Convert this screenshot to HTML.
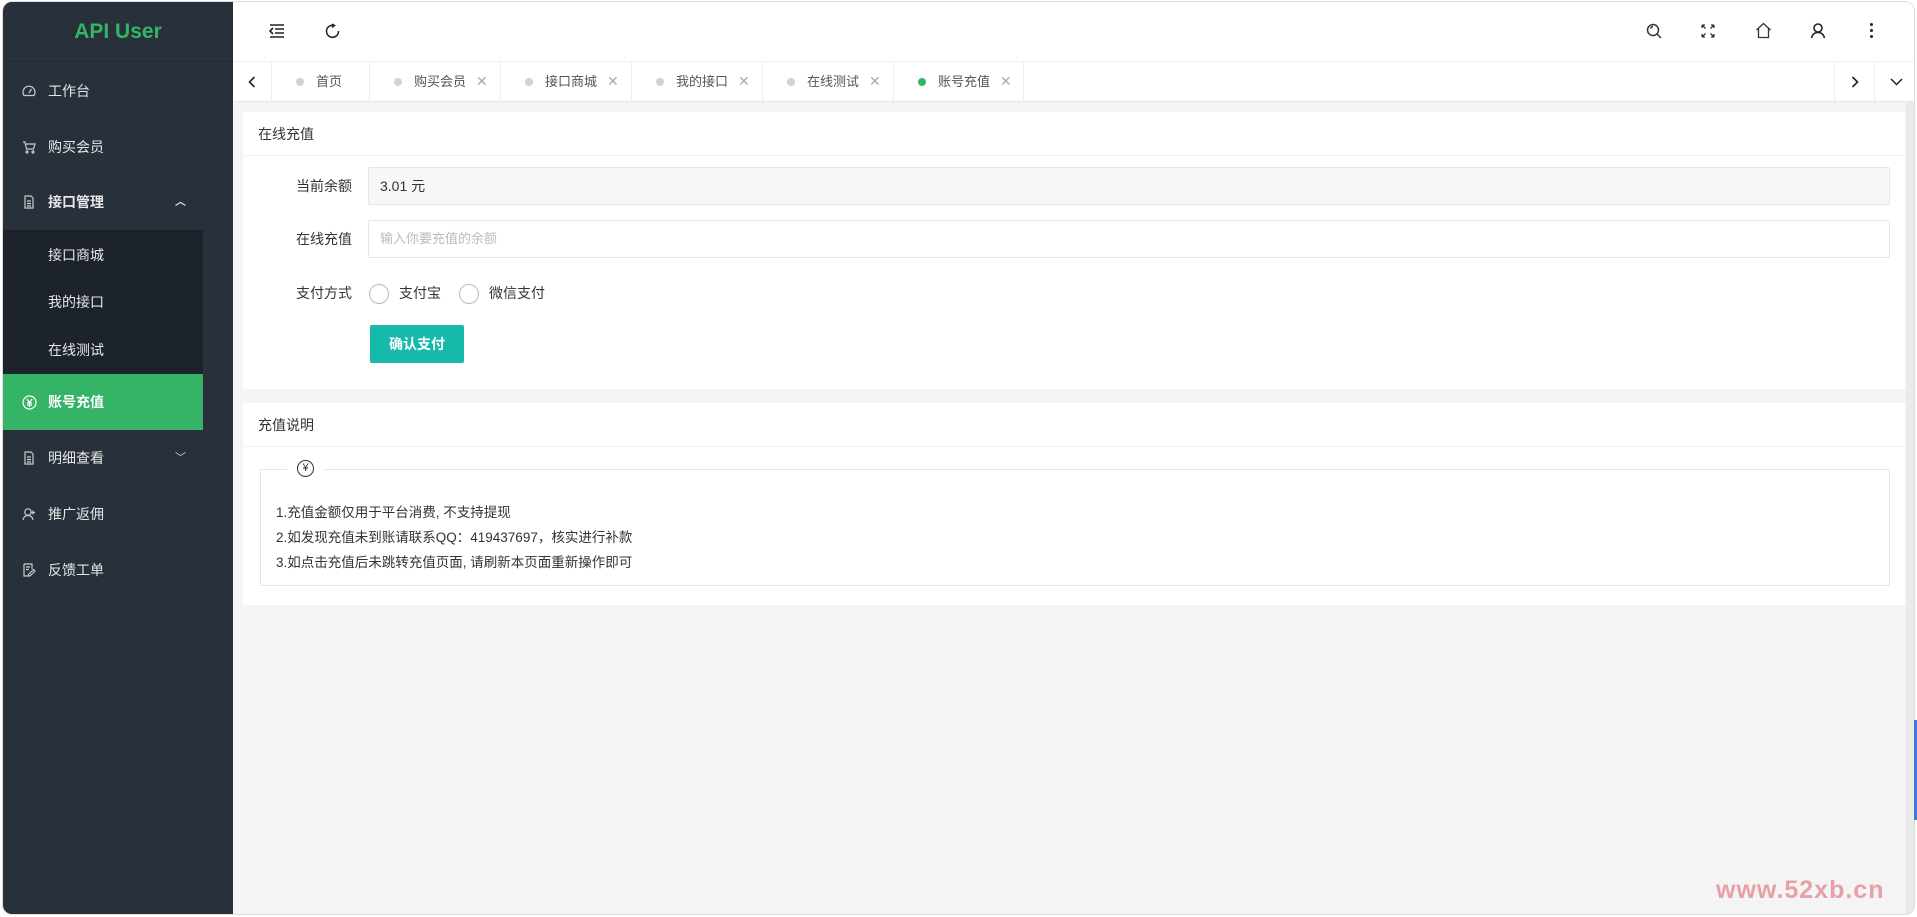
<!DOCTYPE html><html><head><meta charset="utf-8"><style>
*{box-sizing:border-box;margin:0;padding:0}
body{width:1917px;height:917px;background:#fff;font-family:"Liberation Sans","Noto Sans CJK SC",sans-serif;font-size:14px;color:#333;position:relative;overflow:hidden}
.frame{position:absolute;left:2px;top:1px;width:1913px;height:914px;border:1px solid #ddd;border-radius:10px;overflow:hidden;background:#f4f4f4}
.side{position:absolute;left:0;top:0;width:230px;height:100%;background:#28313b}
.logo{height:60px;line-height:60px;text-align:center;color:#34b466;font-size:21px;font-weight:bold;border-bottom:1px solid #222a32;width:230px}
.mi{position:absolute;left:0;width:200px;height:56px;line-height:56px;color:#e6e6e6;padding-left:45px;font-size:14px}
.mi svg{position:absolute;left:19px;top:21px}
.sub{position:absolute;left:0;top:228px;width:200px;height:145px;background:#1d232b}
.tb{position:absolute;left:230px;top:0;right:0;height:60px;background:#fff;border-bottom:1px solid #eee}
.tabs{position:absolute;left:230px;top:60px;right:0;height:40px;background:#fff;border-bottom:1px solid #e6e6e6}
.tab{position:absolute;top:0;height:39px;line-height:39px;border-right:1px solid #eee;color:#555;font-size:13px}
.dot{display:inline-block;width:8px;height:8px;border-radius:50%;background:#d2d2d2;margin-right:12px;vertical-align:0}
.x{color:#aaa;margin-left:10px;font-size:14px}
.card{position:absolute;left:240px;width:1662px;background:#fff;border-radius:2px}
.ch{height:44px;line-height:44px;padding-left:15px;border-bottom:1px solid #f0f0f0;font-size:14px}
.lab{position:absolute;width:109px;text-align:right;left:0;font-size:14px;height:38px;line-height:38px}
.inp{position:absolute;left:125px;width:1522px;height:38px;border:1px solid #e6e6e6;border-radius:2px;line-height:36px;padding-left:11px}
.rad{display:inline-block;width:20px;height:20px;border:1px solid #bbb;border-radius:50%;vertical-align:middle;margin-right:10px}
</style></head><body><div class="frame">
<div class="side"><div class="logo">API User</div>
<div class="mi" style="top:61px"><svg width="14" height="14" viewBox="0 0 14 14" fill="none" stroke="#ccc" stroke-width="1.2"><path d="M2 11.5A6 6 0 1 1 12 11.5Z"/><path d="M7 9l2.5-4"/></svg>工作台</div>
<div class="mi" style="top:117px"><svg width="14" height="14" viewBox="0 0 14 14" fill="none" stroke="#ccc" stroke-width="1.2"><path d="M1 2h2l1.5 7h7l1.5-5H4"/><circle cx="5" cy="12" r="1"/><circle cx="11" cy="12" r="1"/></svg>购买会员</div>
<div class="mi" style="top:172px;font-weight:bold"><svg width="14" height="14" viewBox="0 0 14 14" fill="none" stroke="#ccc" stroke-width="1.2"><path d="M3 1h6l2 2v10H3ZM5 6h4M5 8.5h4M5 11h4"/></svg>接口管理<span style="position:absolute;left:172px;top:0;font-size:11px;color:#ddd">︿</span></div>
<div class="sub"></div>
<div class="mi" style="top:225px">接口商城</div>
<div class="mi" style="top:272px">我的接口</div>
<div class="mi" style="top:320px">在线测试</div>
<div class="mi" style="top:372px;background:#35b467;color:#fff;font-weight:bold"><svg width="15" height="15" viewBox="0 0 15 15" fill="none" stroke="#fff" stroke-width="1.2"><circle cx="7.5" cy="7.5" r="6.5"/><path d="M5 4l2.5 3.5L10 4M7.5 7.5V12M5 8h5M5 10h5"/></svg>账号充值</div>
<div class="mi" style="top:428px"><svg width="14" height="14" viewBox="0 0 14 14" fill="none" stroke="#ccc" stroke-width="1.2"><path d="M3 1h6l2 2v10H3ZM5 6h4M5 8.5h4M5 11h4"/></svg>明细查看<span style="position:absolute;left:172px;top:0;font-size:11px;color:#ccc">﹀</span></div>
<div class="mi" style="top:484px"><svg width="14" height="14" viewBox="0 0 14 14" fill="none" stroke="#ccc" stroke-width="1.2"><circle cx="6" cy="5" r="3.2"/><path d="M1 13c.5-3 2.5-4.5 5-4.5s4.5 1.5 5 4.5M11 3.5v4M9 5.5h4"/></svg>推广返佣</div>
<div class="mi" style="top:540px"><svg width="14" height="14" viewBox="0 0 14 14" fill="none" stroke="#ccc" stroke-width="1.2"><path d="M2 1h8v5M2 1v12h5M4 4h4M4 6.5h3M8 13l5-5-1.5-1.5-5 5V13Z"/></svg>反馈工单</div>
</div>
<div class="tb">
<svg style="position:absolute;left:36px;top:22px" width="16" height="14" viewBox="0 0 16 14" stroke="#222" stroke-width="1.6" fill="none"><path d="M1 1h14M6 5h9M6 9h9M1 13h14M4 4L1 7l3 3"/></svg>
<svg style="position:absolute;left:92px;top:21px" width="16" height="16" viewBox="0 0 16 16" stroke="#222" stroke-width="1.5" fill="none"><path d="M9 2.5A6 6 0 1 0 13.5 8"/><path d="M7 1l2.5 1.5L7 4.5"/></svg>
<svg style="position:absolute;left:1413px;top:21px" width="17" height="17" viewBox="0 0 17 17" stroke="#333" stroke-width="1.5" fill="none"><circle cx="7" cy="7" r="5.5"/><path d="M11 11l4 4M4.5 5.5A3 3 0 0 1 7 3.5"/></svg>
<svg style="position:absolute;left:1468px;top:22px" width="14" height="14" viewBox="0 0 14 14" stroke="#333" stroke-width="1.3" fill="none"><path d="M1 1l3.5 3.5M1 1h3M1 1v3M13 1L9.5 4.5M13 1h-3M13 1v3M13 13L9.5 9.5M13 13h-3M13 13v-3M1 13l3.5-3.5M1 13h3M1 13v-3"/></svg>
<svg style="position:absolute;left:1522px;top:20px" width="17" height="17" viewBox="0 0 17 17" stroke="#333" stroke-width="1.3" fill="none"><path d="M1.5 8L8.5 1.5 15.5 8M3.5 6.5v9h10v-9"/></svg>
<svg style="position:absolute;left:1577px;top:20px" width="16" height="17" viewBox="0 0 16 17" stroke="#222" stroke-width="1.6" fill="none"><circle cx="8" cy="6" r="4"/><path d="M1.5 16c1-4 3.5-5.5 6.5-5.5s5.5 1.5 6.5 5.5"/></svg>
<div style="position:absolute;left:1637px;top:21px;width:3px"><div style="width:3px;height:3px;background:#222;border-radius:50%;margin-bottom:3px"></div><div style="width:3px;height:3px;background:#222;border-radius:50%;margin-bottom:3px"></div><div style="width:3px;height:3px;background:#222;border-radius:50%"></div></div>
</div>
<div class="tabs">
<svg style="position:absolute;left:15px;top:14px" width="8" height="12" viewBox="0 0 8 12" fill="none" stroke="#222" stroke-width="1.6"><path d="M6.5 1L1.5 6l5 5"/></svg>
<div class="tab" style="left:0;width:39px"></div>
<div class="tab" style="left:39px;width:98px;padding-left:24px"><span class="dot"></span>首页</div>
<div class="tab" style="left:137px;width:131px;padding-left:24px"><span class="dot"></span>购买会员<span class="x">✕</span></div>
<div class="tab" style="left:268px;width:131px;padding-left:24px"><span class="dot"></span>接口商城<span class="x">✕</span></div>
<div class="tab" style="left:399px;width:131px;padding-left:24px"><span class="dot"></span>我的接口<span class="x">✕</span></div>
<div class="tab" style="left:530px;width:131px;padding-left:24px"><span class="dot"></span>在线测试<span class="x">✕</span></div>
<div class="tab" style="left:661px;width:130px;padding-left:24px"><span class="dot" style="background:#35b467"></span>账号充值<span class="x">✕</span></div>
<div class="tab" style="left:1601px;width:41px;border-left:1px solid #eee"></div>
<svg style="position:absolute;left:1618px;top:14px" width="8" height="12" viewBox="0 0 8 12" fill="none" stroke="#222" stroke-width="1.6"><path d="M1.5 1l5 5-5 5"/></svg>
<svg style="position:absolute;left:1657px;top:16px" width="13" height="8" viewBox="0 0 13 8" fill="none" stroke="#222" stroke-width="1.5"><path d="M1 1l5.5 5.5L12 1"/></svg>
</div>
<div style="position:absolute;right:0;top:100px;width:8px;height:820px;background:#eaeaea"></div>
<div class="card" style="top:110px;height:277px"><div class="ch">在线充值</div>
<div class="lab" style="top:55px">当前余额</div><div class="inp" style="top:55px;background:#f7f7f7">3.01 元</div>
<div class="lab" style="top:108px">在线充值</div><div class="inp" style="top:108px;color:#bbb;font-size:13px">输入你要充值的余额</div>
<div class="lab" style="top:162px">支付方式</div>
<div style="position:absolute;left:126px;top:162px;height:38px;line-height:38px"><span class="rad"></span>支付宝<span class="rad" style="margin-left:18px"></span>微信支付</div>
<div style="position:absolute;left:127px;top:213px;width:94px;height:38px;background:#16baaa;color:#fff;text-align:center;line-height:38px;border-radius:2px;font-weight:bold">确认支付</div>
</div>
<div class="card" style="top:401px;height:202px"><div class="ch">充值说明</div>
<div style="position:absolute;left:17px;top:66px;width:1630px;height:117px;border:1px solid #e6e6e6">
<div style="position:absolute;left:26px;top:-10px;background:#fff;padding:0 10px;font-size:12px"><span style="display:inline-block;width:17px;height:17px;border:1px solid #333;border-radius:50%;text-align:center;line-height:15px;font-size:11px">¥</span></div>
<div style="position:absolute;left:15px;top:30px;line-height:25px;font-size:13.5px">1.充值金额仅用于平台消费, 不支持提现<br>2.如发现充值未到账请联系QQ：419437697，核实进行补款<br>3.如点击充值后未跳转充值页面, 请刷新本页面重新操作即可</div>
</div></div>
</div>
<div style="position:absolute;right:0;top:720px;width:3px;height:100px;background:#3a7bd5"></div>
<div style="position:absolute;left:1716px;top:876px;color:#e7a0a5;font-size:25px;font-weight:bold;letter-spacing:1px">www.52xb.cn</div>
</body></html>
